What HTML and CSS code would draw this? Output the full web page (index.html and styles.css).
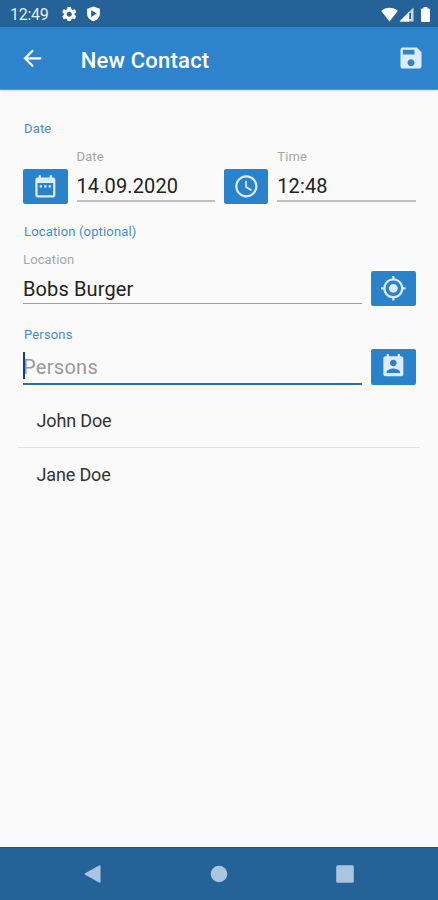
FILE: index.html
```html
<!DOCTYPE html>
<html lang="en">
<head>
<meta charset="utf-8">
<title>New Contact</title>
<link rel="stylesheet" href="styles.css">
</head>
<body>
<div class="screen">
  <div class="status">
    <span class="clock">12:49</span>
    <svg class="gear" viewBox="2 2 20 20"><path d="M19.43 12.98c.04-.32.07-.64.07-.98s-.03-.66-.07-.98l2.11-1.65c.19-.15.24-.42.12-.64l-2-3.46c-.12-.22-.39-.3-.61-.22l-2.49 1c-.52-.4-1.08-.73-1.69-.98l-.38-2.65C14.46 2.18 14.25 2 14 2h-4c-.25 0-.46.18-.49.42l-.38 2.65c-.61.25-1.17.59-1.69.98l-2.49-1c-.23-.09-.49 0-.61.22l-2 3.46c-.13.22-.07.49.12.64l2.11 1.65c-.04.32-.07.65-.07.98s.03.66.07.98l-2.11 1.65c-.19.15-.24.42-.12.64l2 3.46c.12.22.39.3.61.22l2.49-1c.52.4 1.08.73 1.69.98l.38 2.65c.03.24.24.42.49.42h4c.25 0 .46-.18.49-.42l.38-2.65c.61-.25 1.17-.59 1.69-.98l2.49 1c.23.09.49 0 .61-.22l2-3.46c.12-.22.07-.49-.12-.64l-2.11-1.65zM12 15.500c-1.930 0-3.500-1.570-3.500-3.500s1.570-3.500 3.500-3.500 3.500 1.570 3.500 3.500-1.570 3.500-3.500 3.500z"/></svg>
    <svg class="shield" viewBox="0 0 15 17"><path fill-rule="evenodd" d="M7.500 .5 14.300 3v5.200c0 3.700-2.800 6.800-6.800 8C3.500 15 .7 11.900 .7 8.200V3zM5 4.600v7l6-3.500z"/></svg>
    <span class="spacer"></span>
    <svg class="wifi" viewBox="0 0 17 15"><path d="M8.500 14.500.2 4C4.800-.2 12.200-.2 16.800 4z"/></svg>
    <svg class="signal" viewBox="0 0 15 15"><path d="M14.500.5v14H.5z" opacity=".75"/><path d="M10 5v9.500H.5z"/><path class="cut" d="M10.300 6h1.700v6h-1.700z"/></svg>
    <svg class="battery" viewBox="0 0 9 15"><path d="M2.500 0h4v1.500H8q1 0 1 1v11q0 1.500-1 1.500H1q-1 0-1-1.500v-11q0-1 1-1h1.500z"/></svg>
  </div>
  <header class="appbar">
    <svg class="icon back" viewBox="0 0 24 24"><path d="M20 11H7.830l5.590-5.590L12 4l-8 8 8 8 1.410-1.410L7.830 13H20v-2z"/></svg>
    <h1>New Contact</h1>
    <svg class="save" viewBox="0 0 24 24"><path d="M17 3H5c-1.110 0-2 .9-2 2v14c0 1.100.89 2 2 2h14c1.100 0 2-.9 2-2V7l-4-4zm-5 16c-1.660 0-3-1.340-3-3s1.340-3 3-3 3 1.340 3 3-1.340 3-3 3zm3-10H5V5h10v4z"/></svg>
  </header>
  <main>
    <section class="date-section">
      <h2>Date</h2>
      <div class="row">
        <div class="btn"><svg class="icon" viewBox="0 0 24 24"><path d="M9 11H7v2h2v-2zm4 0h-2v2h2v-2zm4 0h-2v2h2v-2zm2-7h-1V2h-2v2H8V2H6v2H5c-1.110 0-1.990.9-1.990 2L3 20c0 1.100.89 2 2 2h14c1.100 0 2-.9 2-2V6c0-1.100-.9-2-2-2zm0 16H5V9h14v11z"/></svg></div>
        <div class="field light"><span class="hint">Date</span><span class="value">14.09.2020</span></div>
        <div class="btn"><svg class="icon" viewBox="0 0 24 24"><path d="M11.990 2C6.470 2 2 6.480 2 12s4.470 10 9.990 10C17.520 22 22 17.520 22 12S17.520 2 11.990 2zM12 20c-4.420 0-8-3.580-8-8s3.580-8 8-8 8 3.580 8 8-3.580 8-8 8zm.5-13H11v6l5.250 3.150.75-1.230-4.500-2.670z"/></svg></div>
        <div class="field light"><span class="hint">Time</span><span class="value">12:48</span></div>
      </div>
    </section>
    <section class="location-section">
      <h2>Location (optional)</h2>
      <div class="row">
        <div class="field"><span class="hint">Location</span><span class="value">Bobs Burger</span></div>
        <div class="btn"><svg class="icon" viewBox="0 0 24 24"><path d="M12 8c-2.210 0-4 1.790-4 4s1.790 4 4 4 4-1.790 4-4-1.790-4-4-4zm8.940 3c-.46-4.170-3.770-7.480-7.940-7.940V1h-2v2.060C6.830 3.520 3.520 6.830 3.060 11H1v2h2.060c.46 4.170 3.770 7.480 7.940 7.940V23h2v-2.060c4.170-.46 7.480-3.770 7.940-7.940H23v-2h-2.060zM12 19c-3.870 0-7-3.130-7-7s3.130-7 7-7 7 3.130 7 7-3.130 7-7 7z"/></svg></div>
      </div>
    </section>
    <section class="persons-section">
      <h2>Persons</h2>
      <div class="row">
        <div class="field focused"><span class="value placeholder">Persons</span></div>
        <div class="btn"><svg class="icon" viewBox="0 0 24 24"><path d="M19 3h-1V1h-2v2H8V1H6v2H5c-1.110 0-2 .9-2 2v14c0 1.100.89 2 2 2h14c1.100 0 2-.9 2-2V5c0-1.100-.9-2-2-2zm-7 3c1.660 0 3 1.340 3 3s-1.340 3-3 3-3-1.340-3-3 1.340-3 3-3zm6 12H6v-1c0-2 4-3.100 6-3.100s6 1.100 6 3.100v1z"/></svg></div>
      </div>
    </section>
    <ul class="people"><li>John Doe</li><li>Jane Doe</li></ul>
  </main>
  <nav class="navbar">
    <svg viewBox="0 0 18 18"><path d="M1.500 8 15.500.3q1-.4 1 .7v16q0 1.100-1 .7L1.500 10q-1.500-1 0-2z"/></svg>
    <svg viewBox="0 0 18 18"><circle cx="9" cy="9" r="8.300"/></svg>
    <svg viewBox="0 0 18 18"><rect x=".2" y=".2" width="17.600" height="17.600" rx="1.500"/></svg>
  </nav>
</div>
</body>
</html>
```
FILE: styles.css
```css
* { box-sizing: border-box; }
body { margin: 0; font-family: Roboto, sans-serif; background: #fafafa; color: #222; }
svg { display: block; flex: none; fill: currentColor; }
h1, h2, ul { margin: 0; padding: 0; font-weight: 400; }
.screen { width: 438px; height: 900px; display: flex; flex-direction: column; }

.status { height: 27px; background: #246298; color: #fff; display: flex; align-items: center; padding: 1px 8px 0 10px; }
.clock { width: 51.500px; font-size: 16px; color: #e6eef6; letter-spacing: -.3px; }
.gear { width: 14.500px; height: 14.500px; }
.shield { width: 15px; height: 16px; margin-left: 10px; }
.spacer { flex: 1; }
.wifi { width: 17px; height: 15px; }
.signal { width: 15px; height: 15px; margin: 0 7px 0 1px; }
.signal .cut { fill: #246298; }
.battery { width: 9px; height: 15px; }

.appbar { height: 63px; background: #2d84cc; border-bottom: 1px solid #5b96cb; color: #fff; display: flex; align-items: center; padding: 0 13px 0 18.500px; box-shadow: 0 1px 2px #0002; }
.icon { width: 26.700px; height: 26.700px; }
.appbar h1 { flex: 1; margin: 5px 0 0 35.500px; font-size: 22px; line-height: 26px; font-weight: 500; letter-spacing: .22px; }
.save { width: 28px; height: 28px; color: #deebf9; }

main { flex: 1; padding: 31px 22.500px 0 23px; }
h2 { font-size: 13px; line-height: 16px; color: #488acf; padding-left: 1px; letter-spacing: .16px; }
.row { display: flex; align-items: flex-end; gap: 9px; }
.btn { width: 44.500px; height: 35.500px; flex: none; display: flex; align-items: center; justify-content: center; background: #2a82cb; color: #deebf9; border-radius: 2px; margin-bottom: 1px; }
.field { flex: 1; display: flex; flex-direction: column; margin-bottom: 3px; border-bottom: 1.500px solid #a0a0a0; }
.light { border-bottom: 2px solid #c0c0c0; }
.hint { font-size: 13px; line-height: 16px; color: #a6a6a6; letter-spacing: .13px; }
.value { font-size: 20px; line-height: 24px; padding: 9px 0 2px; letter-spacing: .12px; white-space: nowrap; }
.date-section { height: 103px; }
.date-section .row { margin-top: 12px; }
.location-section { height: 103px; }
.location-section .row { margin-top: 12px; }
.persons-section { height: 66px; }
.persons-section .row { margin-top: 6px; }
.persons-section .btn { margin-bottom: 1.500px; }
.focused { position: relative; border-bottom: 2px solid #316da8; margin-bottom: 1px; }
.focused::before { content: ""; position: absolute; left: 0; top: 1px; width: 2px; height: 27px; background: #183c8c; }
.focused .value { padding: 4px 0; letter-spacing: .3px; }
.placeholder { color: #999; }
.people { list-style: none; margin: 0 -4.500px 0 -5px; }
.people li { height: 54px; line-height: 55px; padding-left: 18.500px; font-size: 18px; letter-spacing: -.15px; color: #333; }
.people li + li { border-top: 1.500px solid #e1e1e1; line-height: 54px; }

.navbar { height: 53px; background: #246298; border-top: 1px solid #145685; color: #a9c5df; display: flex; align-items: center; justify-content: space-between; padding: 0 84px 0 83.500px; }
.navbar svg { width: 18px; height: 18px; }
```
